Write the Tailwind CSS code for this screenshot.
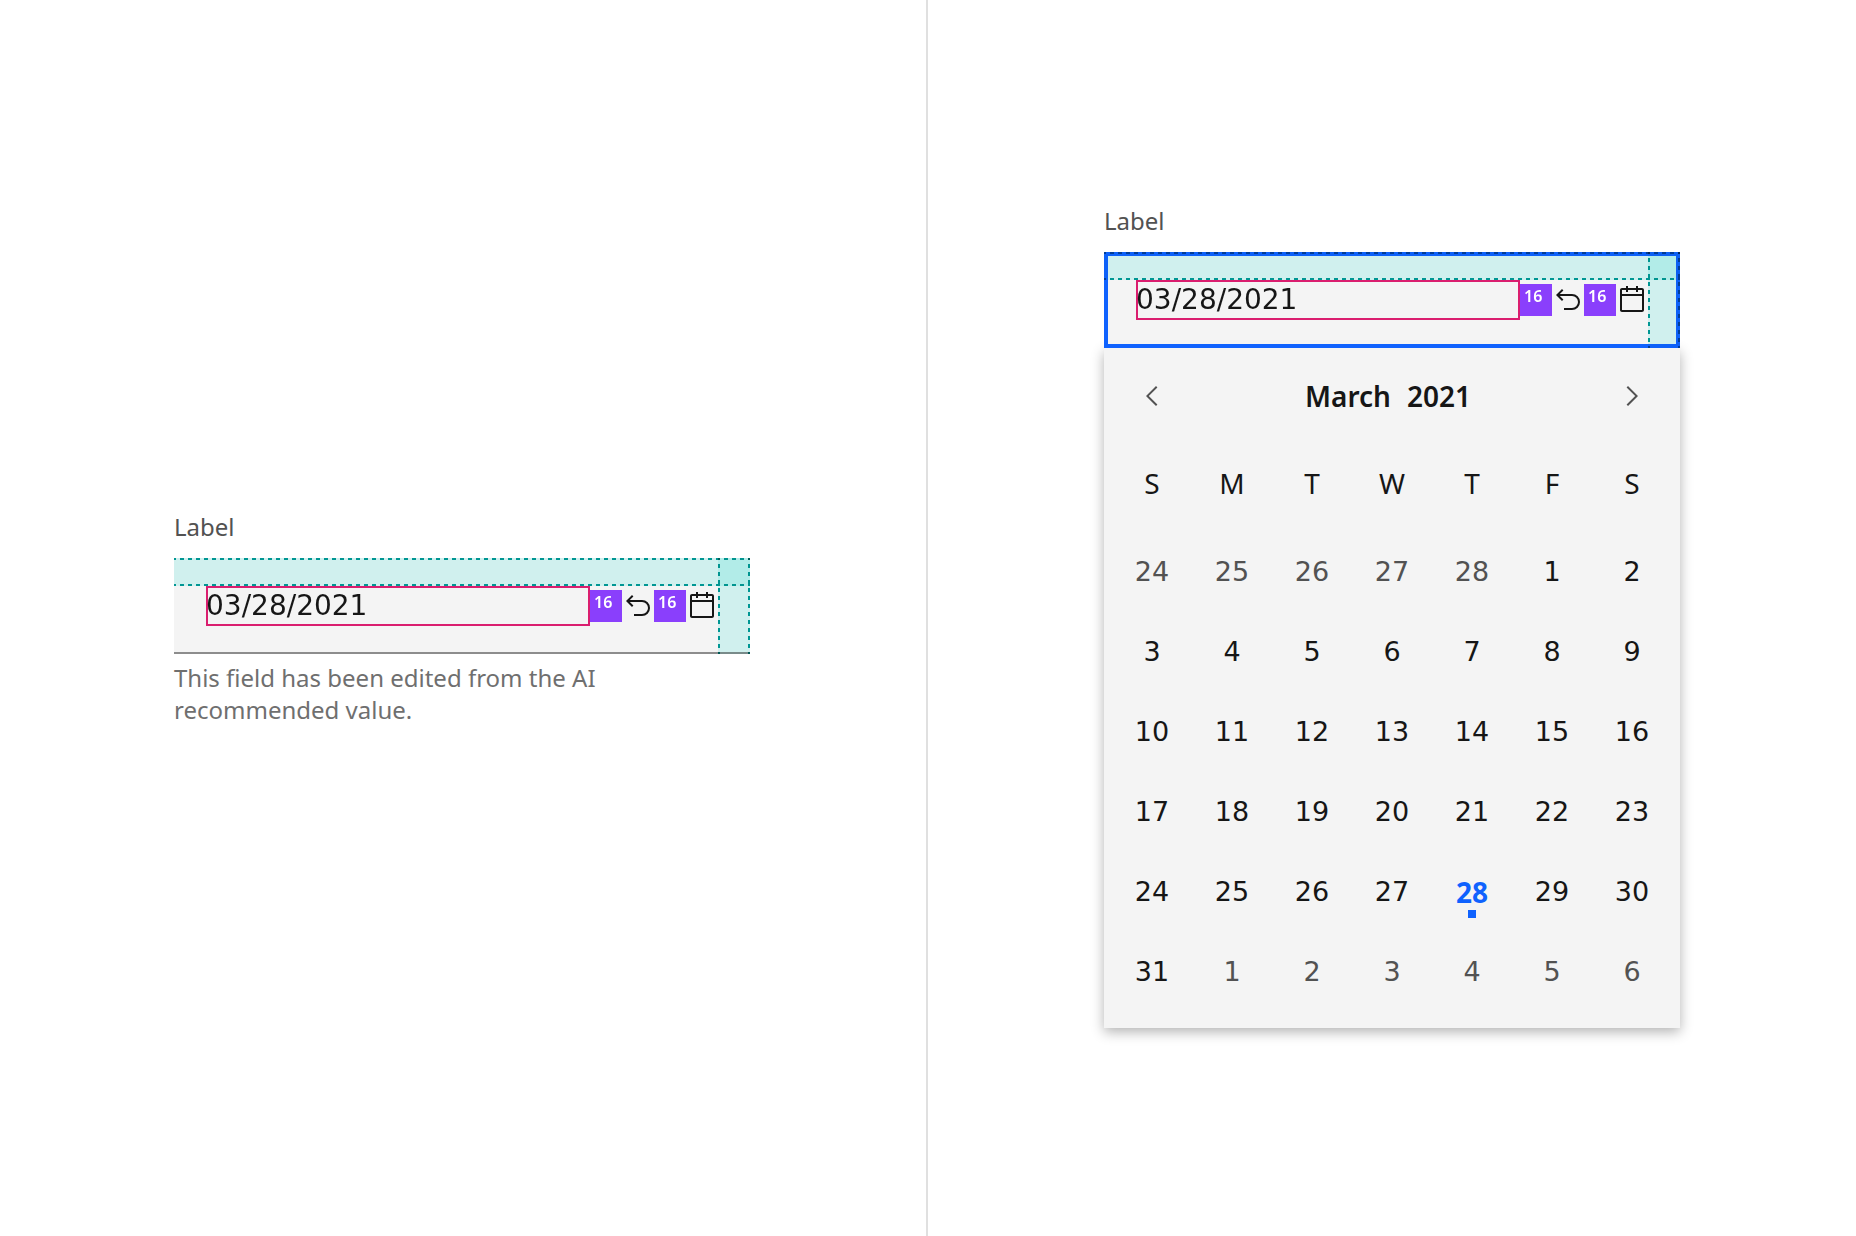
<!DOCTYPE html>
<html lang="en">
<head>
<meta charset="utf-8">
<meta name="viewport" content="width=device-width, initial-scale=1">
<title>Date picker spacing</title>
<script src="https://cdn.jsdelivr.net/npm/@tailwindcss/browser@4"></script>
</head>
<body class="bg-white font-['Noto_Sans',sans-serif] text-[#161616]">
<svg class="hidden" aria-hidden="true">
  <symbol id="undo" viewBox="0 0 32 32"><path d="M20,10H7.8149l3.5874-3.5859L10,5,4,11,10,17l1.4023-1.4146L7.8179,12H20a6,6,0,0,1,0,12H12v2h8a8,8,0,0,0,0-16Z"/></symbol>
  <symbol id="calendar" viewBox="0 0 32 32"><path d="M26,4h-4V2h-2v2h-8V2h-2v2H6C4.9,4,4,4.9,4,6v20c0,1.1,0.9,2,2,2h20c1.1,0,2-0.9,2-2V6C28,4.9,27.1,4,26,4z M26,26H6V12h20V26z M26,10H6V6h4v2h2V6h8v2h2V6h4V10z"/></symbol>
</svg>

<main class="grid min-h-screen grid-cols-2">
  <section class="flex items-center justify-center border-r-2 border-[#e0e0e0] pr-0.5">
    <div class="w-full max-w-[576px]">
      <label for="date-edited" class="mb-3.5 block text-2xl/[34px] text-[#525252]">Label</label>
      <div class="relative isolate flex h-24 border-b-2 border-[#8d8d8d] bg-[#f4f4f4] pt-7 pr-8 pl-8">
        <input id="date-edited" type="text" value="03/28/2021" aria-describedby="date-help" class="h-10 min-w-0 flex-1 bg-transparent font-['DejaVu_Sans',sans-serif] text-[28px] shadow-[inset_0_0_0_2px_#da1e6f] outline-none">
        <span class="mt-1 h-8 w-8 bg-[#8a3ffc] pt-0.5 pl-1 text-base/5 font-semibold text-white">16</span>
        <button type="button" aria-label="Revert to AI input" class="mt-1 h-8 w-8"><svg class="h-8 w-8 fill-[#161616]"><use href="#undo"/></svg></button>
        <span class="mt-1 h-8 w-8 bg-[#8a3ffc] pt-0.5 pl-1 text-base/5 font-semibold text-white">16</span>
        <button type="button" aria-label="Open calendar" class="mt-1 h-8 w-8"><svg class="h-8 w-8 fill-[#161616]"><use href="#calendar"/></svg></button>
        <!-- spacing guides -->
        <span class="pointer-events-none absolute inset-x-0 top-0 flex h-7 flex-col justify-between bg-[#dafbf9] mix-blend-multiply">
          <span class="h-0.5 bg-[repeating-linear-gradient(90deg,#009d9a_0_2px,transparent_2px_6px,#009d9a_6px_8px)]"></span>
          <span class="h-0.5 bg-[repeating-linear-gradient(90deg,#009d9a_0_2px,transparent_2px_6px,#009d9a_6px_8px)]"></span>
        </span>
        <span class="pointer-events-none absolute top-0 right-0 flex h-24 w-8 justify-between bg-[#dafbf9] mix-blend-multiply">
          <span class="w-0.5 bg-[repeating-linear-gradient(180deg,#009d9a_0_2px,transparent_2px_6px,#009d9a_6px_8px)]"></span>
          <span class="w-0.5 bg-[repeating-linear-gradient(180deg,#009d9a_0_2px,transparent_2px_6px,#009d9a_6px_8px)]"></span>
        </span>
      </div>
      <p id="date-help" class="mt-2 pr-16 text-2xl/[32px] text-[#6f6f6f]">This field has been edited from the AI recommended value.</p>
    </div>
  </section>

  <section class="flex items-center justify-center pb-1">
    <div class="w-full max-w-[576px]">
      <label for="date-open" class="mb-3.5 block text-2xl/[34px] text-[#525252]">Label</label>
      <div class="relative isolate z-10 flex h-24 bg-[#f4f4f4] pt-7 pr-8 pl-8">
        <span class="pointer-events-none absolute inset-0 border-4 border-[#0f62fe]"></span>
        <input id="date-open" type="text" value="03/28/2021" class="h-10 min-w-0 flex-1 bg-transparent font-['DejaVu_Sans',sans-serif] text-[28px] shadow-[inset_0_0_0_2px_#da1e6f] outline-none">
        <span class="mt-1 h-8 w-8 bg-[#8a3ffc] pt-0.5 pl-1 text-base/5 font-semibold text-white">16</span>
        <button type="button" aria-label="Revert to AI input" class="mt-1 h-8 w-8"><svg class="h-8 w-8 fill-[#161616]"><use href="#undo"/></svg></button>
        <span class="mt-1 h-8 w-8 bg-[#8a3ffc] pt-0.5 pl-1 text-base/5 font-semibold text-white">16</span>
        <button type="button" aria-label="Close calendar" aria-expanded="true" class="mt-1 h-8 w-8"><svg class="h-8 w-8 fill-[#161616]"><use href="#calendar"/></svg></button>
        <!-- spacing guides -->
        <span class="pointer-events-none absolute inset-x-0 top-0 flex h-7 flex-col justify-between bg-[#dafbf9] mix-blend-multiply">
          <span class="h-0.5 bg-[repeating-linear-gradient(90deg,#009d9a_0_2px,transparent_2px_6px,#009d9a_6px_8px)]"></span>
          <span class="h-0.5 bg-[repeating-linear-gradient(90deg,#009d9a_0_2px,transparent_2px_6px,#009d9a_6px_8px)]"></span>
        </span>
        <span class="pointer-events-none absolute top-0 right-0 flex h-24 w-8 justify-between bg-[#dafbf9] mix-blend-multiply">
          <span class="w-0.5 bg-[repeating-linear-gradient(180deg,#009d9a_0_2px,transparent_2px_6px,#009d9a_6px_8px)]"></span>
          <span class="w-0.5 bg-[repeating-linear-gradient(180deg,#009d9a_0_2px,transparent_2px_6px,#009d9a_6px_8px)]"></span>
        </span>
      </div>

      <div class="bg-[#f4f4f4] px-2 pb-4 shadow-[0_4px_12px_rgba(0,0,0,0.3)]">
        <div class="flex h-24 items-center justify-between">
          <button type="button" aria-label="Previous month" class="flex h-20 w-20 items-center justify-center"><svg viewBox="0 0 32 32" class="h-8 w-8 fill-[#525252]"><path d="M10,16L20,6l1.4,1.4L12.8,16l8.6,8.6L20,26z"/></svg></button>
          <h2 class="flex gap-4 pr-2 text-[28px]/9 font-semibold"><span>March</span><span>2021</span></h2>
          <button type="button" aria-label="Next month" class="flex h-20 w-20 items-center justify-center"><svg viewBox="0 0 32 32" class="h-8 w-8 fill-[#525252]"><path d="M22,16L12,26l-1.4-1.4l8.6-8.6l-8.6-8.6L12,6z"/></svg></button>
        </div>
        <table class="w-full table-fixed text-center">
          <thead>
            <tr class="h-[88px] align-top text-[28px]/[78px]">
              <th class="font-normal" scope="col" abbr="Sunday">S</th><th class="font-normal" scope="col" abbr="Monday">M</th><th class="font-normal" scope="col" abbr="Tuesday">T</th><th class="font-normal" scope="col" abbr="Wednesday">W</th><th class="font-normal" scope="col" abbr="Thursday">T</th><th class="font-normal" scope="col" abbr="Friday">F</th><th class="font-normal" scope="col" abbr="Saturday">S</th>
            </tr>
          </thead>
          <tbody id="days" class="font-['DejaVu_Sans',sans-serif] text-[27px]/[80px]"></tbody>
        </table>
      </div>
    </div>
  </section>
</main>

<script>
  const weeks = [
    [24, 25, 26, 27, 28, 1, 2],
    [3, 4, 5, 6, 7, 8, 9],
    [10, 11, 12, 13, 14, 15, 16],
    [17, 18, 19, 20, 21, 22, 23],
    [24, 25, 26, 27, 28, 29, 30],
    [31, 1, 2, 3, 4, 5, 6],
  ];
  const body = document.getElementById('days');
  weeks.forEach((week, w) => {
    const row = body.insertRow();
    week.forEach((day) => {
      const outside = (w === 0 && day > 7) || (w === 5 && day < 8);
      const selected = w === 4 && day === 28;
      const button = document.createElement('button');
      button.type = 'button';
      button.className = 'relative block h-20 w-full';
      button.textContent = day;
      if (outside) button.classList.add('text-[#525252]');
      if (selected) {
        button.setAttribute('aria-pressed', 'true');
        button.className = "relative block h-20 w-full font-['Noto_Sans',sans-serif] text-[28px]/[78px] font-bold text-[#0f62fe]";
        const dot = document.createElement('span');
        dot.className = 'absolute bottom-3.5 left-1/2 h-2 w-2 -translate-x-1/2 bg-[#0f62fe]';
        button.append(dot);
      }
      row.insertCell().append(button);
    });
  });
</script>
</body>
</html>
